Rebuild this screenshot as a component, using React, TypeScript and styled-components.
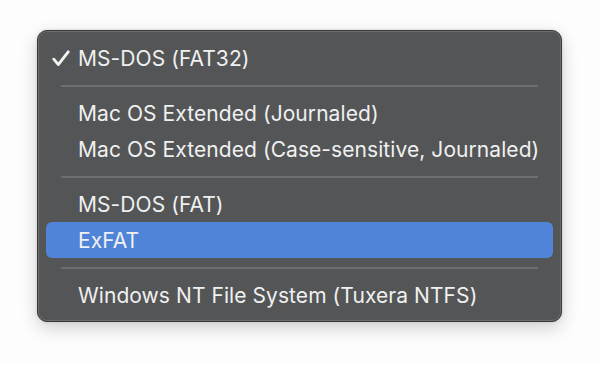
import React from "react";
import styled, { createGlobalStyle } from "styled-components";

const Global = createGlobalStyle`
  html, body { margin: 0; padding: 0; background: #ffffff; }
  body { font-family: "Inter", "Liberation Sans", sans-serif; }
`;

const Page = styled.div`
  width: 600px;
  height: 365px;
  padding: 30px 0 0 37px;
  box-sizing: border-box;
  background: #fdfdfd;
`;

const Menu = styled.div`
  width: 525px;
  box-sizing: border-box;
  background: #545556;
  border-radius: 10px;
  border: 1px solid #3a3a3b;
  box-shadow: inset 0 0 0 1px #6c6d6e, 0 6px 18px rgba(0, 0, 0, 0.18),
    0 0 3px rgba(0, 0, 0, 0.15);
  padding: 9px 8px 8px 8px;
  display: flex;
  flex-direction: column;
`;

const Item = styled.div<{ $active?: boolean }>`
  height: 36px;
  display: flex;
  align-items: center;
  border-radius: 6px;
  padding-left: 7px;
  background: ${(p) => (p.$active ? "#4f84d9" : "transparent")};
  color: #f0f0f0;
  font-size: 21px;
  letter-spacing: 0.07px;
  white-space: nowrap;
`;

const CheckSlot = styled.span`
  width: 25px;
  display: flex;
  align-items: center;
  flex: none;
`;

const Separator = styled.div`
  height: 19px;
  display: flex;
  align-items: center;
  padding: 0 15px;
  &::after {
    content: "";
    flex: 1;
    height: 2px;
    background: #6d6e6f;
  }
`;

const Check = () => (
  <svg width="18" height="17" viewBox="0 0 18 17" style={{ marginLeft: -1 }}>
    <path
      d="M1.8 9.2 L6.3 14.6 L16.2 1.8"
      fill="none"
      stroke="#f4f4f4"
      strokeWidth="2.8"
      strokeLinecap="round"
      strokeLinejoin="round"
    />
  </svg>
);

type Entry = { label?: string; checked?: boolean; active?: boolean; sep?: boolean };

const entries: Entry[] = [
  { label: "MS-DOS (FAT32)", checked: true },
  { sep: true },
  { label: "Mac OS Extended (Journaled)" },
  { label: "Mac OS Extended (Case-sensitive, Journaled)" },
  { sep: true },
  { label: "MS-DOS (FAT)" },
  { label: "ExFAT", active: true },
  { sep: true },
  { label: "Windows NT File System (Tuxera NTFS)" },
];

export default function App() {
  return (
    <Page>
      <Global />
      <Menu>
        {entries.map((e, i) =>
          e.sep ? (
            <Separator key={i} />
          ) : (
            <Item key={i} $active={e.active}>
              <CheckSlot>{e.checked ? <Check /> : null}</CheckSlot>
              {e.label}
            </Item>
          )
        )}
      </Menu>
    </Page>
  );
}
